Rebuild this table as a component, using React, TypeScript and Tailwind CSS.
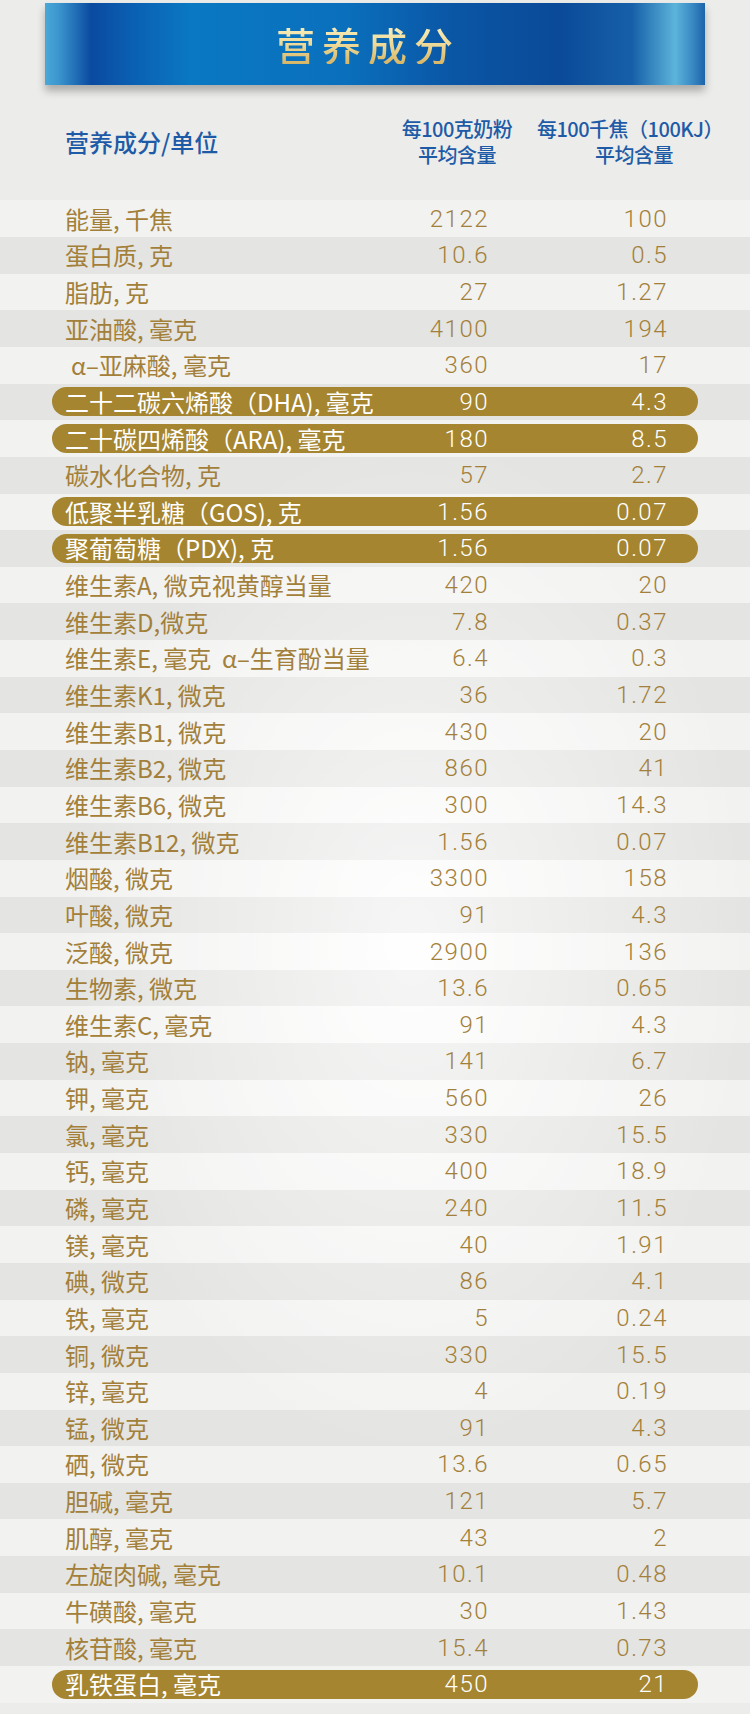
import React from 'react';

type Row = { name: string; a: string; b: string; hi?: boolean; indent?: boolean };

const rows: Row[] = [
  { name: '能量, 千焦', a: '2122', b: '100' },
  { name: '蛋白质, 克', a: '10.6', b: '0.5' },
  { name: '脂肪, 克', a: '27', b: '1.27' },
  { name: '亚油酸, 毫克', a: '4100', b: '194' },
  { name: 'α–亚麻酸, 毫克', a: '360', b: '17', indent: true },
  { name: '二十二碳六烯酸（DHA), 毫克', a: '90', b: '4.3', hi: true },
  { name: '二十碳四烯酸（ARA), 毫克', a: '180', b: '8.5', hi: true },
  { name: '碳水化合物, 克', a: '57', b: '2.7' },
  { name: '低聚半乳糖（GOS), 克', a: '1.56', b: '0.07', hi: true },
  { name: '聚葡萄糖（PDX), 克', a: '1.56', b: '0.07', hi: true },
  { name: '维生素A, 微克视黄醇当量', a: '420', b: '20' },
  { name: '维生素D,微克', a: '7.8', b: '0.37' },
  { name: '维生素E, 毫克  α–生育酚当量', a: '6.4', b: '0.3' },
  { name: '维生素K1, 微克', a: '36', b: '1.72' },
  { name: '维生素B1, 微克', a: '430', b: '20' },
  { name: '维生素B2, 微克', a: '860', b: '41' },
  { name: '维生素B6, 微克', a: '300', b: '14.3' },
  { name: '维生素B12, 微克', a: '1.56', b: '0.07' },
  { name: '烟酸, 微克', a: '3300', b: '158' },
  { name: '叶酸, 微克', a: '91', b: '4.3' },
  { name: '泛酸, 微克', a: '2900', b: '136' },
  { name: '生物素, 微克', a: '13.6', b: '0.65' },
  { name: '维生素C, 毫克', a: '91', b: '4.3' },
  { name: '钠, 毫克', a: '141', b: '6.7' },
  { name: '钾, 毫克', a: '560', b: '26' },
  { name: '氯, 毫克', a: '330', b: '15.5' },
  { name: '钙, 毫克', a: '400', b: '18.9' },
  { name: '磷, 毫克', a: '240', b: '11.5' },
  { name: '镁, 毫克', a: '40', b: '1.91' },
  { name: '碘, 微克', a: '86', b: '4.1' },
  { name: '铁, 毫克', a: '5', b: '0.24' },
  { name: '铜, 微克', a: '330', b: '15.5' },
  { name: '锌, 毫克', a: '4', b: '0.19' },
  { name: '锰, 微克', a: '91', b: '4.3' },
  { name: '硒, 微克', a: '13.6', b: '0.65' },
  { name: '胆碱, 毫克', a: '121', b: '5.7' },
  { name: '肌醇, 毫克', a: '43', b: '2' },
  { name: '左旋肉碱, 毫克', a: '10.1', b: '0.48' },
  { name: '牛磺酸, 毫克', a: '30', b: '1.43' },
  { name: '核苷酸, 毫克', a: '15.4', b: '0.73' },
  { name: '乳铁蛋白, 毫克', a: '450', b: '21', hi: true },
];

function NutrientRow({ row, i }: { row: Row; i: number }) {
  const band = i % 2 === 0 ? 'bg-white/35' : 'bg-black/[0.03]';
  const pill = row.hi ? 'bg-[#a5852f] text-white' : 'text-[#a3803a]';
  return (
    <div className={`h-[36.65px] flex items-center ${band}`}>
      <div className={`mx-[52px] h-[29px] w-[646px] rounded-[15px] flex items-center ${pill}`}>
        <div
          className={`w-[313px] whitespace-pre text-[24px] leading-none font-['Noto_Sans_CJK_SC',sans-serif] ${
            row.indent ? 'pl-[19px]' : 'pl-[13px]'
          }`}
        >
          {row.name}
        </div>
        <div className="w-[124px] text-right text-[24px] leading-none font-light tracking-[1.5px] font-['Roboto','Noto_Sans_CJK_SC',sans-serif]">
          {row.a}
        </div>
        <div className="w-[179px] text-right text-[24px] leading-none font-light tracking-[1.5px] font-['Roboto','Noto_Sans_CJK_SC',sans-serif]">
          {row.b}
        </div>
      </div>
    </div>
  );
}

export default function App() {
  return (
    <div className="w-[750px] h-[1714px] overflow-hidden bg-[#ececea] bg-[radial-gradient(ellipse_45%_30%_at_55%_55%,rgba(255,255,255,0.95),rgba(255,255,255,0)_100%)]">
      {/* title ribbon */}
      <div className="pt-[3px] px-[45px]">
        <div className="h-[82px] flex items-center justify-center shadow-[0_6px_8px_rgba(0,0,0,0.28)] bg-[linear-gradient(90deg,#4aa8d8_0%,#3c96cf_2%,#0a4aa0_7%,#0a5fb2_13%,#0a78c2_22%,#0a70bd_45%,#0a56a5_62%,#0a4a98_78%,#1760a9_89%,#5cb4da_95.5%,#3a8ac4_98%,#1d63aa_100%)]">
          <span className="pr-[14px] text-[39px] leading-none font-medium tracking-[7px] bg-linear-to-b from-[#f8efbe] via-[#eed997] to-[#d6b566] bg-clip-text text-transparent font-['Noto_Sans_CJK_SC',sans-serif]">
            营养成分
          </span>
        </div>
      </div>

      {/* column heads */}
      <div className="h-[115.4px] flex items-center pl-[65px] pb-[2px] text-[#1e5ba7] font-medium font-['Noto_Sans_CJK_SC',sans-serif]">
        <div className="w-[317px] text-[24px] leading-none">营养成分/单位</div>
        <div className="w-[150px] flex flex-col items-center gap-[5px] text-[20px] leading-[21px] tracking-[-0.5px]">
          <div>每100克奶粉</div>
          <div>平均含量</div>
        </div>
        <div className="w-[196px] flex flex-col items-center gap-[5px] text-[20px] leading-[21px] tracking-[-0.5px]">
          <div>每100千焦（100KJ）</div>
          <div className="pl-[8px]">平均含量</div>
        </div>
      </div>

      {/* rows */}
      <div>
        {rows.map((row, i) => (
          <NutrientRow key={row.name} row={row} i={i} />
        ))}
      </div>
    </div>
  );
}
